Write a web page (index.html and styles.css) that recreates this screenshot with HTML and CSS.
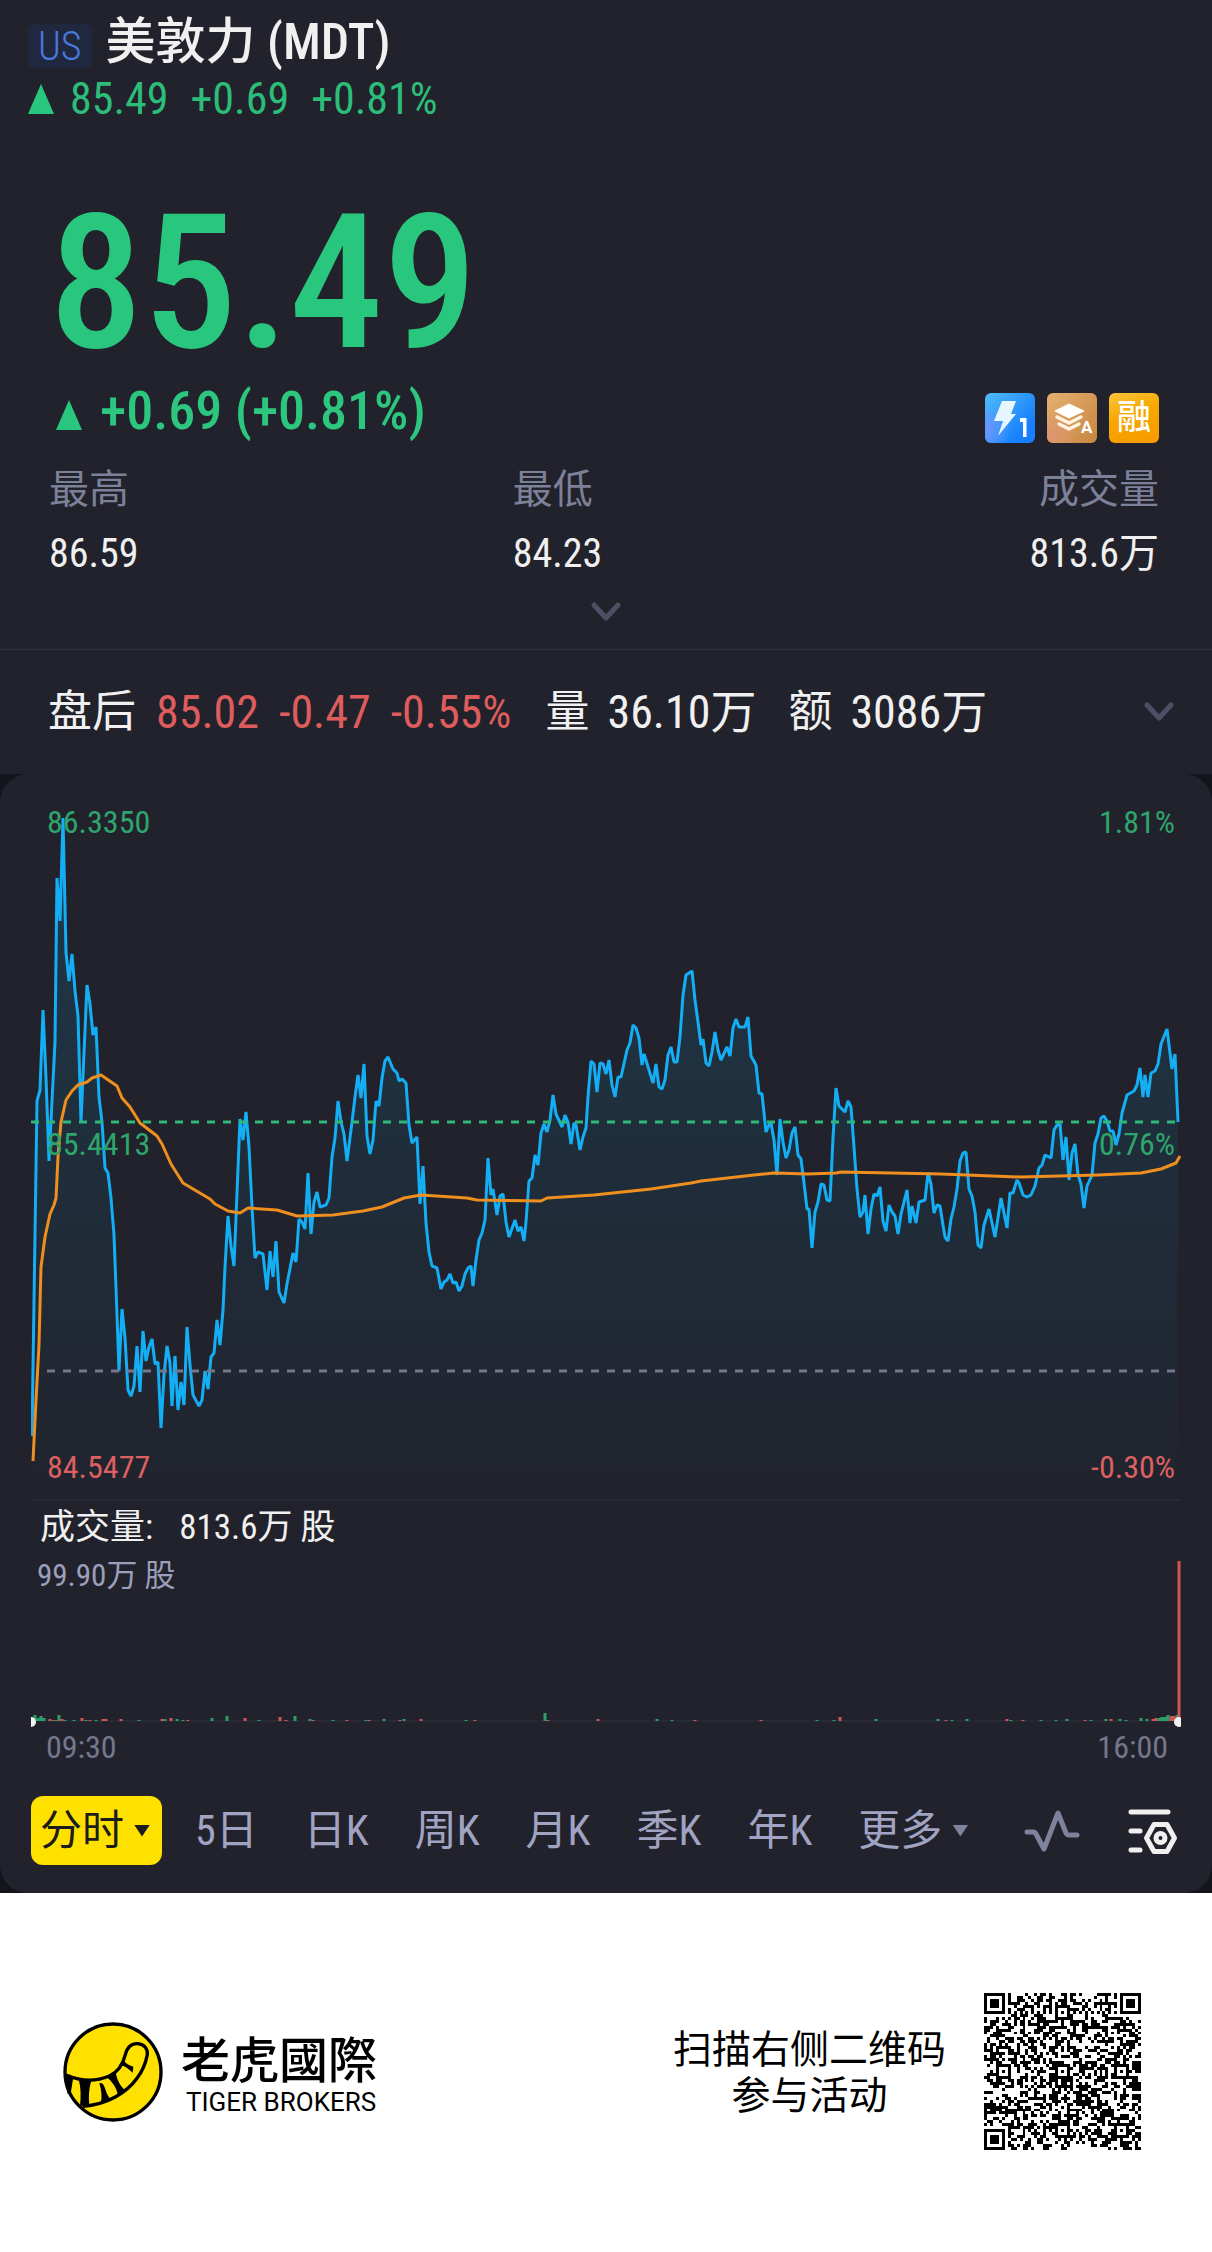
FILE: index.html
```
<!DOCTYPE html>
<html lang="zh-CN">
<head>
<meta charset="utf-8">
<meta name="viewport" content="width=device-width, initial-scale=1">
<title>美敦力 (MDT)</title>
<link rel="stylesheet" href="styles.css">
</head>
<body>
<main class="app">
  <header class="top">
    <div class="title-row"><span class="market">US</span><h1 class="name">美敦力 (MDT)</h1></div>
    <div class="ticker"><i class="up-arrow"></i><span>85.49</span><span>+0.69</span><span>+0.81%</span></div>
  </header>

  <section class="quote">
    <div class="price">85.49</div>
    <div class="change-row">
      <div class="change"><i class="up-arrow"></i><span>+0.69 (+0.81%)</span></div>
      <div class="badges">
        <svg class="badge" viewBox="0 0 50 50" aria-label="Level 1">
          <defs><linearGradient id="blue" x1="0.2" y1="0" x2="0.9" y2="0.6"><stop offset="0" stop-color="#4ab4fb"/><stop offset="1" stop-color="#1880fc"/></linearGradient>
          <radialGradient id="violet" cx="0" cy="0.75" r="0.5"><stop offset="0" stop-color="#6f93ff"/><stop offset="1" stop-color="#6f93ff" stop-opacity="0"/></radialGradient></defs>
          <rect width="50" height="50" rx="6" fill="url(#blue)"/><rect width="50" height="50" rx="6" fill="url(#violet)"/>
          <path d="M17 8h14l-5 13h5L13 43l5-15H9z" fill="#e6f6ff"/>
          <path d="M35 25h6.500v19h-3.500V29h-3z" fill="#fff"/>
        </svg>
        <svg class="badge" viewBox="0 0 50 50" aria-label="Depth A">
          <defs><linearGradient id="tan" x1="0" y1="0" x2="1" y2="0.8"><stop offset="0" stop-color="#e6b072"/><stop offset="1" stop-color="#c98a43"/></linearGradient>
          <radialGradient id="rose" cx="0.1" cy="0.85" r="0.5"><stop offset="0" stop-color="#dd9470"/><stop offset="1" stop-color="#dd9470" stop-opacity="0"/></radialGradient></defs>
          <rect width="50" height="50" rx="6" fill="url(#tan)"/><rect width="50" height="50" rx="6" fill="url(#rose)"/>
          <path d="M22 11l15 7-15 7-14-7z" fill="#fff" stroke="#fff" stroke-linejoin="round"/>
          <path d="M10 24l12 6 12-6M12 31l10 5 10-5" fill="none" stroke="#fff3e2" stroke-width="3.500" stroke-linecap="round" stroke-linejoin="round"/>
          <text x="34" y="40" class="badge-letter">A</text>
        </svg>
        <span class="badge badge-margin">融</span>
      </div>
    </div>
    <dl class="stats">
      <div><dt>最高</dt><dd>86.59</dd></div>
      <div><dt>最低</dt><dd>84.23</dd></div>
      <div class="stat-end"><dt>成交量</dt><dd>813.6万</dd></div>
    </dl>
    <button class="expand" aria-label="展开"><svg class="chevron" viewBox="0 0 30 20"><path d="M3 3l12 13L27 3"/></svg></button>
  </section>

  <section class="after">
    <span class="after-label">盘后</span>
    <span class="after-price"><span>85.02</span><span>-0.47</span><span>-0.55%</span></span>
    <span class="after-item">量 <b>36.10万</b></span>
    <span class="after-item">额 <b>3086万</b></span>
    <button class="after-more" aria-label="盘后详情"><svg class="chevron" viewBox="0 0 30 20"><path d="M3 3l12 13L27 3"/></svg></button>
  </section>

  <section class="card">
    <svg class="chart" viewBox="31 774 1150 727" role="img" aria-label="分时走势">
      <defs><linearGradient id="fade" gradientUnits="userSpaceOnUse" x1="0" y1="818" x2="0" y2="1500"><stop offset="0" stop-color="#0fb0ee" stop-opacity="0.160"/><stop offset="0.500" stop-color="#0fb0ee" stop-opacity="0.080"/><stop offset="1" stop-color="#0fb0ee" stop-opacity="0.010"/></linearGradient></defs>
      <path id="area" fill="url(#fade)"/>
      <polyline id="price" class="line-price" points="32,1436 37,1101 40,1090 43,1010 46,1078 49,1161 52,1101 55,1042 57,878 60,921 63,818 66,952 69,981 72,954 75,991 78,1016 81,1122 84,1053 87,985 90,1004 93,1035 96,1027 99,1097 102,1122 105,1168 108,1173 111,1198 114,1235 117,1315 119,1371 122,1309 125,1338 128,1390 131,1396 134,1386 137,1346 140,1392 143,1331 146,1361 149,1347 152,1339 155,1364 158,1362 161,1428 164,1375 167,1346 170,1363 172,1406 175,1356 178,1410 181,1382 184,1405 187,1327 190,1365 193,1395 199,1406 202,1400 205,1371 208,1389 211,1357 214,1353 217,1320 220,1345 223,1310 225,1267 228,1216 231,1246 234,1266 237,1193 240,1119 243,1140 246,1112 249,1147 252,1207 255,1258 258,1252 263,1254 267,1290 270,1251 273,1277 276,1241 279,1292 284,1303 287,1284 293,1253 296,1262 299,1219 302,1222 305,1229 308,1173 311,1234 314,1202 317,1192 320,1207 326,1205 329,1198 332,1157 335,1138 338,1101 341,1122 344,1134 347,1161 352,1122 355,1097 358,1075 361,1098 364,1064 367,1136 370,1154 373,1140 376,1101 379,1106 382,1078 385,1061 388,1057 393,1069 397,1073 399,1081 402,1079 406,1083 409,1125 412,1143 417,1137 420,1204 423,1166 426,1223 429,1252 432,1266 437,1268 441,1289 444,1282 447,1280 450,1274 453,1283 456,1282 459,1291 462,1286 465,1274 468,1268 471,1266 473,1286 476,1260 479,1240 482,1233 485,1220 488,1158 491,1195 493,1189 497,1215 500,1196 503,1194 506,1222 509,1237 515,1220 518,1231 521,1227 524,1241 526,1222 529,1181 532,1178 535,1155 538,1165 541,1133 544,1124 547,1132 550,1120 553,1095 556,1114 562,1127 565,1115 568,1122 571,1144 574,1123 576,1125 580,1150 583,1137 586,1128 588,1097 591,1061 594,1064 597,1092 600,1063 603,1064 606,1074 609,1060 612,1085 615,1097 618,1077 621,1077 627,1050 630,1043 633,1025 636,1028 639,1038 642,1065 644,1054 649,1070 653,1083 656,1064 659,1087 662,1089 665,1080 668,1055 671,1047 674,1062 677,1062 680,1037 683,995 686,975 692,971 695,1000 698,1022 701,1045 703,1039 706,1063 709,1066 712,1052 715,1032 718,1050 721,1060 727,1047 730,1056 733,1028 736,1019 739,1027 745,1027 748,1017 751,1056 756,1065 759,1093 762,1094 766,1132 769,1125 771,1123 774,1140 777,1175 780,1119 783,1142 786,1158 789,1150 792,1133 795,1127 798,1155 801,1159 804,1183 807,1209 809,1209 812,1248 815,1212 818,1202 821,1184 824,1185 827,1200 830,1201 833,1138 836,1088 839,1106 845,1112 848,1101 851,1107 854,1147 857,1189 860,1217 863,1212 865,1195 868,1234 871,1209 874,1194 877,1196 880,1187 883,1221 886,1231 889,1205 892,1212 895,1216 898,1234 901,1214 907,1190 910,1223 912,1206 916,1223 919,1202 925,1200 928,1173 931,1184 934,1213 937,1205 940,1206 943,1225 945,1237 948,1241 951,1219 954,1207 957,1189 960,1161 963,1153 966,1152 969,1189 972,1196 975,1212 978,1245 981,1248 984,1225 989,1209 995,1237 1001,1198 1007,1228 1010,1193 1013,1193 1017,1180 1019,1183 1023,1195 1027,1197 1031,1195 1035,1186 1039,1168 1042,1165 1045,1155 1051,1158 1054,1130 1057,1125 1060,1124 1063,1160 1066,1137 1069,1180 1072,1153 1075,1144 1078,1175 1081,1184 1084,1208 1087,1186 1092,1175 1095,1143 1098,1134 1101,1118 1104,1116 1107,1121 1110,1131 1113,1131 1116,1145 1119,1134 1122,1113 1127,1095 1134,1091 1137,1085 1140,1068 1143,1097 1145,1075 1148,1097 1151,1073 1155,1071 1158,1064 1161,1044 1167,1029 1172,1069 1175,1054 1178,1122"/>
      <polyline class="line-avg" points="33,1461 36,1400 39,1345 41,1267 45,1237 50,1214 54,1205 56,1198 58,1157 61,1122 66,1100 72,1091 78,1085 87,1082 92,1078 101,1075 117,1086 122,1098 130,1107 140,1123 157,1136 162,1144 171,1164 183,1183 210,1199 215,1204 228,1211 240,1213 248,1208 277,1210 297,1216 333,1215 363,1211 382,1207 404,1198 421,1195 467,1198 477,1200 541,1201 547,1198 594,1195 651,1189 691,1183 701,1181 754,1175 774,1173 808,1174 836,1173 841,1172 941,1174 1021,1177 1098,1175 1141,1173 1161,1169 1176,1163 1180,1156"/>
      <path class="dash-up" d="M31 1122H1176"/>
      <path class="dash-base" d="M47 1371H1176"/>
      <path class="rule" d="M31 1500H1181"/>
      <text class="axis up" x="47" y="833">86.3350</text>
      <text class="axis up" x="47" y="1155">85.4413</text>
      <text class="axis down" x="47" y="1478">84.5477</text>
      <text class="axis up end" x="1175" y="833">1.81%</text>
      <text class="axis up end" x="1175" y="1155">0.76%</text>
      <text class="axis down end" x="1175" y="1478">-0.30%</text>
    </svg>
    <div class="volume-head"><span>成交量:</span><span>813.6万 股</span></div>
    <svg class="chart" viewBox="31 1555 1150 173" role="img" aria-label="成交量">
      <text class="peak" x="37" y="1586">99.90万 股</text>
      <path class="rule" d="M31 1721H1181"/>
      <path class="vol-up" d="M35 1721v-6M38 1721v-3M41 1721v-5M44 1721v-3M53 1721v-1M59 1721v-6M65 1721v-1M74 1721v-1M86 1721v-1M96 1721v-1M139 1721v-1M165 1721v-2M177 1721v-2M183 1721v-1M212 1721v-3M227 1721v-5M259 1721v-1M295 1721v-5M310 1721v-2M333 1721v-1M366 1721v-1M384 1721v-2M404 1721v-2M466 1721v-1M545 1721v-8M657 1721v-2M672 1721v-1M817 1721v-1M834 1721v-1M876 1721v-2M938 1721v-2M952 1721v-1M967 1721v-2M1011 1721v-1M1041 1721v-1M1056 1721v-1M1067 1721v-2M1091 1721v-1M1106 1721v-2M1120 1721v-2M1126 1721v-1M1141 1721v-3M1147 1721v-2M1159 1721v-3M1162 1721v-4M1165 1721v-4M1168 1721v-6M1177 1721v-6"/>
      <path class="vol-down" d="M50 1721v-2M56 1721v-1M62 1721v-2M82 1721v-3M90 1721v-1M103 1721v-2M106 1721v-2M121 1721v-2M162 1721v-2M171 1721v-3M188 1721v-1M245 1721v-3M280 1721v-4M286 1721v-1M313 1721v-1M347 1721v-1M369 1721v-1M400 1721v-1M421 1721v-2M475 1721v-1M548 1721v-1M598 1721v-2M695 1721v-1M761 1721v-1M840 1721v-4M946 1721v-1M1007 1721v-2M1023 1721v-1M1085 1721v-1M1111 1721v-2M1153 1721v-2M1156 1721v-3M1171 1721v-5M1174 1721v-5"/>
      <path class="vol-last" d="M1179 1561v160"/>
      <circle cx="31" cy="1722" r="5" fill="#f2f2f2"/><circle cx="1179" cy="1722" r="5" fill="#f2f2f2"/>
    </svg>
    <div class="times"><span>09:30</span><span>16:00</span></div>
    <div class="toolbar">
      <button class="tab-active">分时<i class="caret"></i></button>
      <nav class="tabs">
        <button class="tab">5日</button><button class="tab">日K</button><button class="tab">周K</button><button class="tab">月K</button><button class="tab">季K</button><button class="tab">年K</button><button class="tab tab-more">更多<i class="caret"></i></button>
      </nav>
      <button class="tool" aria-label="指标"><svg class="icon-pulse" viewBox="0 0 56 44"><path d="M3 23h6q2 0 3 2l8 15L34 4l8 20q1 2 3 2h8"/></svg></button>
      <button class="tool" aria-label="设置"><svg class="icon-set" viewBox="0 0 50 48"><path d="M3 5h37M3 24h9M3 43h9M26 17.500h13L46.500 31 39 44.500H26L18.500 31z"/><circle cx="32.500" cy="31" r="4.500"/></svg></button>
    </div>
  </section>
</main>

<footer class="footer">
  <div class="brand">
    <svg class="logo" viewBox="71 128 300 300" aria-hidden="true">
      <circle cx="221" cy="278" r="144" fill="#ffe100" stroke="#000" stroke-width="10"/>
      <path d="M80 287C125 306 172 306 210 290C240 277 252 250 258 226C264 202 279 192 296 193C315 195 326 209 324 226C319 252 309 276 293 297C262 340 205 376 130 381" fill="none" stroke="#000" stroke-width="10"/>
      <path d="M78 284l24 9-7 44-11 6zM118 300l38 4c-7 22-9 46-6 74l-28 2c3-28 3-54-4-80zM180 312c9-4 14 4 18 18 4 14 8 20 13 26l-26 14c3-20 2-36-5-58zM203 294l26-18c2 22 12 42 27 56l-21 14c-2-16-12-34-32-52zM240 256l14-12c6 9 14 12 28 18l-2 18c-13-12-22-20-40-24z"/>
    </svg>
    <div class="brand-text"><span class="brand-zh" lang="zh-TW">老虎國際</span><span class="brand-en">TIGER BROKERS</span></div>
  </div>
  <div class="scan">
    <p class="scan-text">扫描右侧二维码<br>参与活动</p>
    <svg id="qr" class="qr" viewBox="0 0 53 53" role="img" aria-label="二维码" shape-rendering="crispEdges"><path/></svg>
  </div>
</footer>
<script src="app.js"></script>
</body>
</html>
```
FILE: styles.css
```
* { box-sizing: border-box; }
body {
  margin: 0;
  background: #fff;
  color: #f0f0f0;
  font-family: "Roboto Condensed", Roboto, "Noto Sans CJK SC", sans-serif;
}
h1, dl, dd, p { margin: 0; }
button { border: 0; padding: 0; background: none; color: inherit; font: inherit; cursor: pointer; }
svg { display: block; }

.app { background: #14141d; }
.top, .quote, .after, .card { background: #21222b; }

.top { padding: 8px 28px 0; }
.title-row { display: flex; align-items: center; gap: 14px; height: 68px; }
.market {
  margin-top: 8px;
  padding: 2px 10px 0;
  border-radius: 6px;
  background: #202840;
  color: #4a78dc;
  font-size: 40px;
  font-weight: 300;
  line-height: 42px;
}
.name { font-size: 50px; line-height: 68px; font-weight: 500; }
.ticker { display: flex; align-items: center; gap: 22px; font-size: 44px; line-height: 46px; color: #2dbd7a; }
.up-arrow {
  width: 26px;
  height: 30px;
  background: #29c77d;
  clip-path: polygon(50% 0, 100% 100%, 0 100%);
}
.ticker .up-arrow { margin-right: -6px; }

.quote { padding: 66px 50px 12px 49px; border-bottom: 1px solid #2e303e; }
.price { font-size: 188px; line-height: 190px; font-weight: 500; color: #29c77d; }
.change-row { display: flex; justify-content: space-between; align-items: flex-end; height: 65px; }
.change { display: flex; align-items: center; gap: 18px; padding-left: 7px; font-size: 54px; line-height: 64px; font-weight: 500; color: #2dc67f; }
.change .up-arrow { margin-top: 8px; }
.badges { display: flex; gap: 12px; padding-right: 3px; }
.badge { width: 50px; height: 50px; }
.badge-letter { font: 700 17px Roboto, sans-serif; fill: #fff; }
.badge-margin {
  border-radius: 6px;
  background: linear-gradient(160deg, #fbc53a, #f7a600 45%, #f79a00);
  color: #fff;
  font-size: 34px;
  font-weight: 500;
  line-height: 48px;
  text-align: center;
}
.stats { display: grid; grid-template-columns: 5fr 5fr 2fr; margin-top: 15px; font-size: 40px; line-height: 64px; }
.stats dt { color: #7d8099; white-space: nowrap; }
.stats dd { white-space: nowrap; }
.stat-end { justify-self: end; padding-right: 3px; text-align: right; }
.expand { display: flex; justify-content: center; align-items: center; width: 100%; height: 51px; }
.chevron { width: 30px; height: 20px; fill: none; stroke: #4d5064; stroke-width: 5; stroke-linecap: round; stroke-linejoin: round; }

.after { display: flex; align-items: center; height: 124px; padding: 0 38px 0 48px; font-size: 46px; line-height: 60px; white-space: nowrap; }
.after-label { margin-right: 20px; font-size: 44px; }
.after-price { display: flex; gap: 20px; margin-right: 34px; color: #de5d5c; }
.after-item { display: flex; gap: 18px; margin-right: 32px; font-size: 44px; }
.after-item b { font-size: 46px; font-weight: 400; }
.after-more { margin-left: auto; }

.card { padding: 0 31px 28px; border-radius: 28px; }
.chart { width: 100%; height: auto; }
.line-price { fill: none; stroke: #14aef5; stroke-width: 3; stroke-linejoin: bevel; }
.line-avg { fill: none; stroke: #ee8f1f; stroke-width: 3; stroke-linejoin: round; }
.dash-up { stroke: #2fb87a; stroke-width: 3; stroke-dasharray: 8 8; }
.dash-base { stroke: #74778c; stroke-width: 3; stroke-dasharray: 8 8; }
.rule { stroke: #2e303e; stroke-width: 1; }
.axis { font-size: 32px; }
.up { fill: #2ea56c; }
.down { fill: #dc6060; }
.peak { font-size: 31px; fill: #9c9fbc; }
.end { text-anchor: end; }
.vol-up, .vol-down, .vol-last { fill: none; stroke-width: 3; }
.vol-up { stroke: #2a9d68; }
.vol-down, .vol-last { stroke: #d05656; }
.volume-head { display: flex; gap: 26px; padding-left: 9px; font-size: 35px; line-height: 54px; }
.times { display: flex; justify-content: space-between; padding: 0 13px 0 15px; font-size: 32px; line-height: 38px; color: #74778e; }

.toolbar { display: flex; align-items: center; margin-top: 30px; font-size: 42px; line-height: 69px; }
.tab-active {
  display: flex;
  align-items: center;
  gap: 10px;
  padding: 0 12px 0 9px;
  border-radius: 12px;
  background: #ffe100;
  color: #1c1c1c;
}
.caret { width: 16px; height: 12px; background: currentColor; clip-path: polygon(0 0, 100% 0, 50% 100%); }
.tabs { display: flex; flex: 1; gap: 46px; padding-left: 33px; color: #a0a3c2; }
.tab { white-space: nowrap; }
.tab-more { display: flex; align-items: center; gap: 10px; }
.tab-more .caret { background: #80839e; }
.tool + .tool { margin-left: 45px; }
.tool { margin-right: 3px; }
.icon-pulse { width: 56px; height: 44px; fill: none; stroke: #7f829c; stroke-width: 5; stroke-linecap: round; stroke-linejoin: round; }
.icon-set { width: 50px; height: 48px; fill: none; stroke: #f0f0f0; stroke-width: 5; stroke-linecap: round; stroke-linejoin: round; }

.footer { display: flex; justify-content: space-between; align-items: center; padding: 100px 71px 102px 63px; color: #000; }
.brand { display: flex; align-items: center; gap: 18px; }
.logo { width: 100px; height: 100px; }
.brand-text { display: flex; flex-direction: column; padding-top: 6px; }
.brand-zh { font: 500 49px/54px "Noto Sans CJK TC", sans-serif; }
.brand-en { padding-left: 5px; font: 400 26px/36px Roboto, sans-serif; }
.scan { display: flex; align-items: center; gap: 38px; }
.scan-text { padding-bottom: 6px; font: 400 39px/46px "Noto Sans CJK SC", sans-serif; text-align: center; }
.qr { width: 157px; height: 157px; }
```
FILE: app.js
```
// Close the price line down to the chart floor to get the shaded area.
const points = document.getElementById('price').getAttribute('points');
document.getElementById('area').setAttribute('d', 'M' + points.split(' ').join('L') + 'V1500H32Z');

// QR symbol, version 9: finder, timing and alignment patterns around the data modules.
const N = 53;
const ring = (dx, dy, rings) => rings.includes(Math.max(Math.abs(dx), Math.abs(dy)));
const finders = [[3, 3], [N - 4, 3], [3, N - 4]];
const aligns = [[26, 6], [6, 26], [26, 26], [46, 26], [26, 46], [46, 46]];
let seed = 20931;
const data = () => (seed = (seed * 1103515245 + 12345) % 2147483648) / 2147483648 < 0.5;
let d = '';
for (let y = 0; y < N; y++) {
  for (let x = 0; x < N; x++) {
    let on = data();
    if (x === 6 || y === 6) on = (x + y) % 2 === 0;
    for (const [cx, cy] of aligns) {
      if (Math.max(Math.abs(x - cx), Math.abs(y - cy)) <= 2) on = ring(x - cx, y - cy, [0, 2]);
    }
    for (const [cx, cy] of finders) {
      if (Math.max(Math.abs(x - cx), Math.abs(y - cy)) <= 4) on = ring(x - cx, y - cy, [0, 1, 3]);
    }
    if (on) d += `M${x} ${y}h1v1h-1z`;
  }
}
document.querySelector('#qr path').setAttribute('d', d);
```
